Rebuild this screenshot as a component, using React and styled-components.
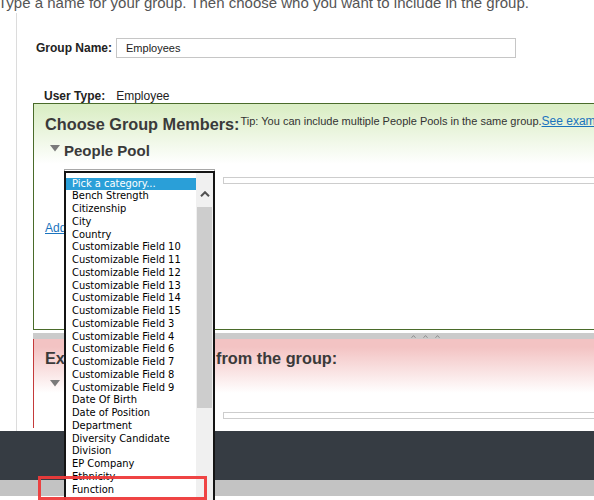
import React from 'react';
import styled, { createGlobalStyle } from 'styled-components';

const GlobalStyle = createGlobalStyle`
  html, body { margin: 0; padding: 0; background: #fff; }
  body {
    width: 594px;
    height: 500px;
    overflow: hidden;
    font-family: "Liberation Sans", Arial, sans-serif;
  }
`;

const Page = styled.div`
  position: relative;
  width: 594px;
  height: 500px;
  overflow: hidden;
  background: #fff;
`;

const Intro = styled.p`
  margin: -6.5px 0 0 -2px;
  height: 19.5px;
  font-size: 15px;
  line-height: 17px;
  color: #555;
  white-space: nowrap;
`;

const Content = styled.div`
  margin-left: 16px;
  border-left: 1px solid #dcdcdc;
  height: 418px;
  padding-left: 16px;
  box-sizing: border-box;
  display: flex;
  flex-direction: column;
`;

const FieldRow = styled.div`
  display: flex;
  align-items: center;
  margin-top: ${(p) => p.$top}px;
  padding-left: ${(p) => p.$indent}px;
  height: ${(p) => p.$height}px;
  font-size: 12px;
  line-height: 14px;
  color: #222;
`;

const FieldLabel = styled.span`
  font-weight: bold;
  margin-right: ${(p) => p.$gap}px;
`;

const TextInput = styled.div`
  width: 400px;
  height: 20px;
  box-sizing: border-box;
  border: 1px solid #c6c6c6;
  padding-left: 9px;
  font-size: 11px;
  line-height: 18px;
  color: #222;
`;

const Panel = styled.section`
  width: 784px;
  flex: none;
  box-sizing: border-box;
  height: ${(p) => p.$height}px;
  padding: ${(p) => p.$padTop}px 0 0 11px;
  border-left: 1px solid ${(p) => p.$edge};
  border-top: ${(p) => (p.$closed ? `1px solid ${p.$edge}` : 'none')};
  border-bottom: ${(p) => (p.$closed ? `1px solid ${p.$edge}` : 'none')};
  background: linear-gradient(
    to bottom,
    ${(p) => p.$tint} 0px,
    ${(p) => p.$tint} ${(p) => p.$hold}px,
    #fff ${(p) => p.$fade}px
  );
  display: flex;
  flex-direction: column;
`;

const HeadRow = styled.div`
  display: flex;
  align-items: flex-start;
`;

const PanelTitle = styled.h2`
  margin: 0;
  font-size: 16.3px;
  line-height: 19px;
  font-weight: bold;
  color: #3a3a3a;
  white-space: nowrap;
`;

const Tip = styled.span`
  margin-left: 1px;
  font-size: 11px;
  line-height: 13px;
  color: #333;
  white-space: nowrap;
`;

const Link = styled.a`
  font-size: 12px;
  color: #1a73bd;
  text-decoration: underline;
  cursor: pointer;
`;

const PoolToggle = styled.div`
  display: flex;
  align-items: flex-start;
  margin-top: 7.6px;
  padding-left: 5px;
  height: 18px;
`;

const Caret = styled.svg`
  width: 10px;
  height: 7px;
  margin-top: ${(p) => p.$drop}px;
  flex: none;
`;

const PoolTitle = styled.h3`
  margin: 0 0 0 4px;
  font-size: 15px;
  line-height: 18px;
  font-weight: bold;
  color: #3a3a3a;
`;

const PoolRow = styled.div`
  display: flex;
  align-items: flex-start;
  margin-top: ${(p) => p.$top}px;
  padding-left: 19px;
`;

const ClosedSelect = styled.div`
  width: 151px;
  height: 20px;
  box-sizing: border-box;
  border: 1px solid #a8a8a8;
  flex: none;
`;

const ValueInput = styled.div`
  flex: 1;
  margin: 8px 0 0 8px;
  height: 7px;
  box-sizing: border-box;
  border: 1px solid #cdcdcd;
  background: #fff;
`;

const AddLine = styled.div`
  margin-top: 32px;
  font-size: 12px;
  line-height: 14px;
`;

const Splitter = styled.div`
  width: 784px;
  flex: none;
  margin-top: 3px;
  height: 6px;
  background: #cbcbcb;
  display: flex;
  justify-content: center;
  align-items: center;
  gap: 7px;
`;

const Grip = styled.svg`
  width: 5px;
  height: 3px;
`;

const Footer = styled.footer`
  height: 49px;
  background: #363c43;
`;

const FooterBar = styled.div`
  height: 16px;
  background: #c3c3c3;
`;

const Listbox = styled.div`
  position: absolute;
  left: 64px;
  top: 171px;
  width: 151px;
  height: 340px;
  box-sizing: border-box;
  border: 2px solid #141414;
  background: #fff;
  display: flex;
`;

const Options = styled.ul`
  flex: 1;
  margin: 0;
  padding: 4.6px 0 0 0;
  list-style: none;
  min-width: 0;
`;

const Option = styled.li`
  height: 12.75px;
  line-height: 12.75px;
  padding-left: 6px;
  font-family: "DejaVu Sans Condensed", "DejaVu Sans", sans-serif;
  font-stretch: semi-condensed;
  font-size: 11px;
  white-space: nowrap;
  color: ${(p) => (p.$active ? '#fff' : '#000')};
  background: ${(p) => (p.$active ? '#2a9fd8' : 'transparent')};
`;

const ScrollTrack = styled.div`
  width: 17px;
  flex: none;
  background: #f0f0f0;
  display: flex;
  flex-direction: column;
`;

const ScrollButton = styled.div`
  height: 34px;
  display: flex;
  justify-content: center;
  padding-top: 18px;
  box-sizing: border-box;
`;

const Thumb = styled.div`
  height: 201px;
  margin: 0 1px;
  background: #cdcdcd;
`;

const Annotation = styled.div`
  position: absolute;
  left: 38px;
  top: 476px;
  width: 169px;
  height: 24px;
  box-sizing: border-box;
  border: 3px solid rgba(238, 58, 58, 0.95);
`;

const options = [
  'Pick a category...',
  'Bench Strength',
  'Citizenship',
  'City',
  'Country',
  'Customizable Field 10',
  'Customizable Field 11',
  'Customizable Field 12',
  'Customizable Field 13',
  'Customizable Field 14',
  'Customizable Field 15',
  'Customizable Field 3',
  'Customizable Field 4',
  'Customizable Field 6',
  'Customizable Field 7',
  'Customizable Field 8',
  'Customizable Field 9',
  'Date Of Birth',
  'Date of Position',
  'Department',
  'Diversity Candidate',
  'Division',
  'EP Company',
  'Ethnicity',
  'Function',
];

const DownCaret = ({ drop }) => (
  <Caret $drop={drop} viewBox="0 0 10 7">
    <path d="M0 0 L10 0 L5 6.5 Z" fill="#7a7a7a" />
  </Caret>
);

const GripMark = () => (
  <Grip viewBox="0 0 5 3">
    <path d="M0.5 2.8 L2.5 0.6 L4.5 2.8" fill="none" stroke="#8c8c8c" strokeWidth="1" />
  </Grip>
);

export default function App() {
  return (
    <>
      <GlobalStyle />
      <Page>
        <Intro>Type a name for your group. Then choose who you want to include in the group.</Intro>
        <Content>
          <FieldRow $top={25} $indent={3} $height={20}>
            <FieldLabel $gap={4}>Group Name:</FieldLabel>
            <TextInput>Employees</TextInput>
          </FieldRow>
          <FieldRow $top={31} $indent={11} $height={14}>
            <FieldLabel $gap={11}>User Type:</FieldLabel>
            <span>Employee</span>
          </FieldRow>

          <Panel $height={227} $padTop={11} $edge="#4a6b2a" $tint="#dbeec6" $hold={4} $fade={60} $closed>
            <HeadRow>
              <PanelTitle>Choose Group Members:</PanelTitle>
              <Tip>
                Tip: You can include multiple People Pools in the same group.
                <Link>See examples</Link>
              </Tip>
            </HeadRow>
            <PoolToggle>
              <DownCaret drop={3} />
              <PoolTitle>People Pool</PoolTitle>
            </PoolToggle>
            <PoolRow $top={9.2}>
              <ClosedSelect />
              <ValueInput />
            </PoolRow>
            <AddLine>
              <Link>Add another People Pool</Link>
            </AddLine>
          </Panel>

          <Splitter>
            <GripMark />
            <GripMark />
            <GripMark />
          </Splitter>

          <Panel $height={89} $padTop={9.5} $edge="#c43a3a" $tint="#f3c3c3" $hold={8} $fade={54}>
            <HeadRow>
              <PanelTitle>Exclude these people from the group:</PanelTitle>
            </HeadRow>
            <PoolToggle>
              <DownCaret drop={5} />
              <PoolTitle>People Pool</PoolTitle>
            </PoolToggle>
            <PoolRow $top={11}>
              <ClosedSelect />
              <ValueInput />
            </PoolRow>
          </Panel>
        </Content>
        <Footer />
        <FooterBar />

        <Listbox role="listbox">
          <Options>
            {options.map((o, i) => (
              <Option key={o} $active={i === 0}>
                {o}
              </Option>
            ))}
          </Options>
          <ScrollTrack>
            <ScrollButton>
              <svg width="10" height="6" viewBox="0 0 10 6">
                <path d="M1 5.2 L5 1.2 L9 5.2" fill="none" stroke="#505050" strokeWidth="2" />
              </svg>
            </ScrollButton>
            <Thumb />
          </ScrollTrack>
        </Listbox>
        <Annotation />
      </Page>
    </>
  );
}
